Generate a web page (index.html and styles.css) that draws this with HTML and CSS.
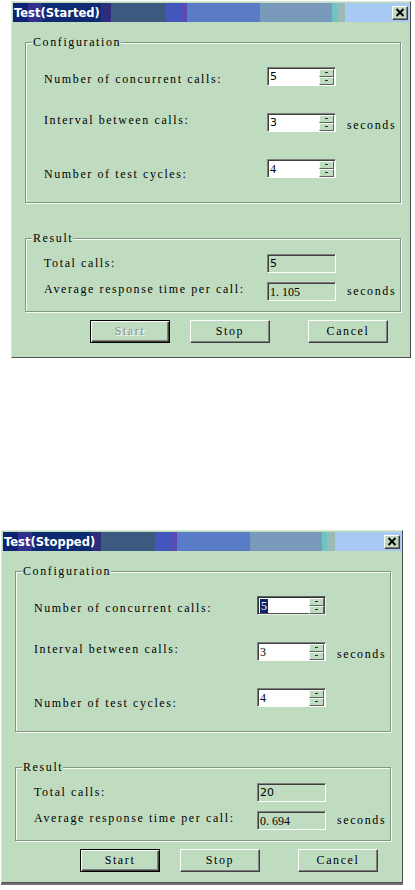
FILE: index.html
```html
<!DOCTYPE html>
<html lang="en">
<head>
    <meta charset="UTF-8">
    <meta name="viewport" content="width=device-width, initial-scale=1.0">
    <title>Test dialogs</title>
    <link rel="stylesheet" href="styles.css">
</head>
<body>

    <!-- Dialog while the test is running -->
    <div class="dialog">
        <div class="titlebar">
            <span class="title">Test(Started)</span>
            <span class="close-btn">
                <svg width="10" height="9" viewBox="0 0 10 9"><path d="M1.5 1l7 7M8.5 1l-7 7" stroke="#000" stroke-width="2" fill="none"/></svg>
            </span>
        </div>
        <div class="dialog-body">
            <fieldset class="group config">
                <legend>Configuration</legend>
                <div class="row">
                    <label class="lbl lbl-low">Number of concurrent calls:</label>
                    <div class="spin"><span class="value sans">5</span><span class="spin-btns"><i></i><i></i></span></div>
                </div>
                <div class="row">
                    <label class="lbl lbl-high">Interval between calls:</label>
                    <div class="spin"><span class="value sans">3</span><span class="spin-btns"><i></i><i></i></span></div>
                    <span class="unit unit-low">seconds</span>
                </div>
                <div class="row">
                    <label class="lbl lbl-lower">Number of test cycles:</label>
                    <div class="spin"><span class="value">4</span><span class="spin-btns"><i></i><i></i></span></div>
                </div>
            </fieldset>

            <fieldset class="group result">
                <legend>Result</legend>
                <div class="row">
                    <label class="lbl">Total calls:</label>
                    <div class="field"><span class="value sans">5</span></div>
                </div>
                <div class="row">
                    <label class="lbl lbl-high">Average response time per call:</label>
                    <div class="field"><span class="value">1. 105</span></div>
                    <span class="unit">seconds</span>
                </div>
            </fieldset>

            <div class="buttons">
                <button class="btn btn-default" disabled>Start</button>
                <button class="btn">Stop</button>
                <button class="btn btn-cancel">Cancel</button>
            </div>
        </div>
    </div>

    <!-- Dialog after the test stopped -->
    <div class="dialog dialog-second">
        <div class="titlebar">
            <span class="title">Test(Stopped)</span>
            <span class="close-btn">
                <svg width="10" height="9" viewBox="0 0 10 9"><path d="M1.5 1l7 7M8.5 1l-7 7" stroke="#000" stroke-width="2" fill="none"/></svg>
            </span>
        </div>
        <div class="dialog-body">
            <fieldset class="group config">
                <legend>Configuration</legend>
                <div class="row">
                    <label class="lbl lbl-low">Number of concurrent calls:</label>
                    <div class="spin spin-focus"><span class="value"><span class="selected">5</span></span><span class="spin-btns"><i></i><i></i></span></div>
                </div>
                <div class="row">
                    <label class="lbl lbl-high">Interval between calls:</label>
                    <div class="spin"><span class="value">3</span><span class="spin-btns"><i></i><i></i></span></div>
                    <span class="unit unit-low">seconds</span>
                </div>
                <div class="row">
                    <label class="lbl lbl-lower">Number of test cycles:</label>
                    <div class="spin"><span class="value">4</span><span class="spin-btns"><i></i><i></i></span></div>
                </div>
            </fieldset>

            <fieldset class="group result">
                <legend>Result</legend>
                <div class="row">
                    <label class="lbl">Total calls:</label>
                    <div class="field"><span class="value sans">20</span></div>
                </div>
                <div class="row">
                    <label class="lbl lbl-high">Average response time per call:</label>
                    <div class="field"><span class="value">0. 694</span></div>
                    <span class="unit">seconds</span>
                </div>
            </fieldset>

            <div class="buttons">
                <button class="btn btn-default">Start</button>
                <button class="btn">Stop</button>
                <button class="btn btn-cancel">Cancel</button>
            </div>
        </div>
    </div>
    <div class="below"></div>

</body>
</html>
```

FILE: styles.css
```css
body {
    margin: 0;
    background: #fff;
    font-family: "Liberation Serif", serif;
    font-size: 12px;
    letter-spacing: 1.6px;
    color: #000;
}
.dialog {
    width: 400px;
    box-sizing: border-box;
    margin: 1px 0 0 11px;
    padding: 1px;
    background: #c0dcc0;
    border: 1px solid;
    border-color: #d8e8d8 #505050 #505050 #d8e8d8;
}
.dialog-second {
    margin: 172px 0 0 1px;
    width: 402px;
}
.titlebar {
    height: 19px;
    display: flex;
    align-items: center;
    justify-content: space-between;
    background: linear-gradient(to right,
        #0c2474 0 15px, #32308c 15px 29px, #0e2a72 29px 88px, #2e2c7c 88px 98px,
        #3c5a80 98px 152px, #4256be 152px 169px, #5a4ab4 169px 174px,
        #5a7cc6 174px 247px, #7a9abc 247px 319px, #6ec4c0 319px 324px,
        #9cbab4 324px 332px, #a8caf2 332px);
}
.title {
    padding-left: 1px;
    color: #fff;
    font-family: "DejaVu Sans", sans-serif;
    font-weight: bold;
    font-size: 11.5px;
    letter-spacing: 0;
}
.close-btn {
    width: 16px;
    height: 14px;
    box-sizing: border-box;
    margin-right: 1px;
    display: flex;
    align-items: center;
    justify-content: center;
    background: #c0dcc0;
    border: 1px solid;
    border-color: #fff #404040 #404040 #fff;
    box-shadow: inset -1px -1px 0 #808080;
}
.dialog-body {
    padding: 13px 8px 13px 12px;
}
.dialog-second .dialog-body {
    padding-bottom: 9px;
}
.group {
    width: 376px;
    box-sizing: border-box;
    margin: 0;
    padding: 18px 0 24px 0;
    border: 1px solid #869486;
    box-shadow: inset 1px 1px 0 #f4fff4, 1px 1px 0 #f4fff4;
    display: flex;
    flex-direction: column;
    gap: 27px;
}
.group legend {
    margin-left: 6px;
    padding: 0 0 0 1px;
    line-height: 14px;
    background: #c0dcc0;
}
.result {
    margin-top: 28px;
    padding: 9px 0 10px 0;
    gap: 9px;
}
.row {
    height: 19px;
    padding-left: 18px;
    display: flex;
    align-items: center;
}
.lbl {
    width: 223px;
    flex-shrink: 0;
}
.lbl-low {
    padding-top: 5px;
}
.lbl-lower {
    padding-top: 11px;
}
.lbl-high {
    padding-bottom: 5px;
}
.unit {
    margin-left: 11px;
}
.unit-low {
    align-self: flex-end;
    line-height: 13px;
}
.spin, .field {
    width: 69px;
    height: 19px;
    box-sizing: border-box;
    display: flex;
    align-items: center;
    border: 1px solid;
    border-color: #808080 #fff #fff #808080;
    box-shadow: inset 1px 1px 0 #404040;
}
.spin {
    background: #fff;
    justify-content: space-between;
    padding: 1px 1px 0 2px;
}
.spin-focus {
    border-color: #606060 #e8f0e8 #e8f0e8 #606060;
    box-shadow: inset 1px 1px 0 #303030, inset -1px -1px 0 #505050;
}
.field {
    background: #c0dcc0;
    padding: 1px 0 0 2px;
}
.value {
    line-height: 14px;
    letter-spacing: 0;
}
.value.sans {
    font-family: "DejaVu Sans", sans-serif;
    font-size: 11px;
}
.selected {
    background: #0a246a;
    color: #fff;
    padding: 0 1px;
}
.spin-btns {
    width: 15px;
    height: 16px;
    display: flex;
    flex-direction: column;
    align-self: flex-start;
}
.spin-btns i {
    flex: 1;
    position: relative;
    background: #c0dcc0;
    border: 1px solid;
    border-color: #f4fff4 #606060 #606060 #f4fff4;
}
.spin-btns i::after {
    content: "";
    position: absolute;
    left: 5px;
    top: 2px;
    width: 3px;
    height: 1px;
    background: #303030;
}
.buttons {
    margin-top: 8px;
    padding-left: 65px;
    display: flex;
    gap: 20px;
}
.btn {
    width: 80px;
    height: 23px;
    padding: 0;
    font-family: "Liberation Serif", serif;
    font-size: 12px;
    letter-spacing: 1.6px;
    color: #000;
    background: #c0dcc0;
    border: 1px solid;
    border-color: #fff #404040 #404040 #fff;
    box-shadow: inset -1px -1px 0 #808080;
}
.btn-default {
    border: 1px solid #000;
    box-shadow: inset 1px 1px 0 #fff, inset -1px -1px 0 #404040, inset -2px -2px 0 #808080;
}
.btn:disabled {
    color: #8c948c;
    text-shadow: 1px 1px 0 #fff;
}
.btn-cancel {
    margin-left: 18px;
}
.below {
    width: 402px;
    margin-left: 1px;
    border-top: 2px solid #707070;
}
```
